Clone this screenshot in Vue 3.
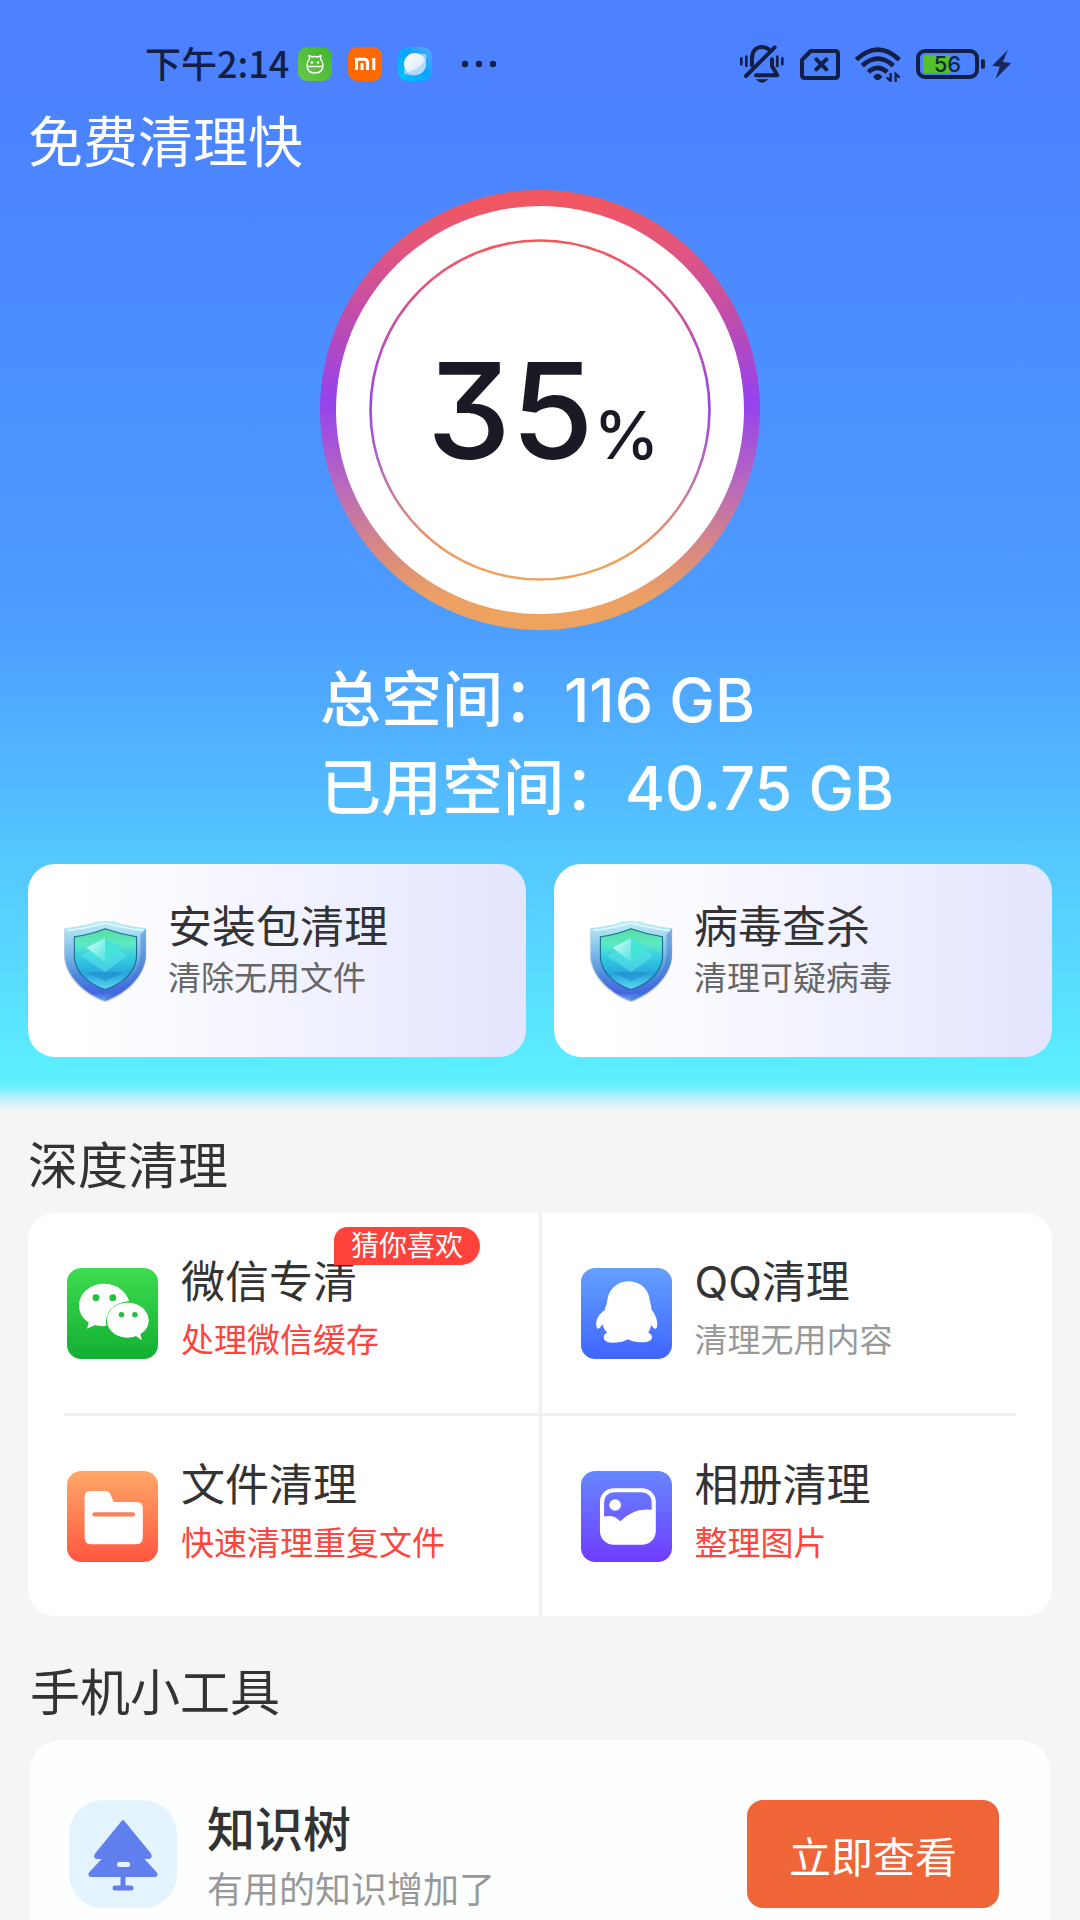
<script setup>
const quickCards = [
  { title: '安装包清理', note: '清除无用文件' },
  { title: '病毒查杀', note: '清理可疑病毒' },
]

const deepRows = [
  [
    { icon: 'wechat', title: '微信专清', note: '处理微信缓存', hot: true, badge: '猜你喜欢' },
    { icon: 'penguin', title: 'QQ清理', note: '清理无用内容', hot: false },
  ],
  [
    { icon: 'folder', title: '文件清理', note: '快速清理重复文件', hot: true },
    { icon: 'album', title: '相册清理', note: '整理图片', hot: true },
  ],
]
</script>

<template>
  <div class="page">
    <svg class="sprite" aria-hidden="true">
      <defs>
        <linearGradient id="g-ring" x1="0" y1="0" x2="0" y2="1">
          <stop offset="0" stop-color="#f3575a" />
          <stop offset="0.12" stop-color="#e4567a" />
          <stop offset="0.3" stop-color="#bd4cb0" />
          <stop offset="0.48" stop-color="#9642ee" />
          <stop offset="0.66" stop-color="#b566c0" />
          <stop offset="0.82" stop-color="#d98a80" />
          <stop offset="0.93" stop-color="#eda163" />
          <stop offset="1" stop-color="#eea45e" />
        </linearGradient>
        <linearGradient id="g-wechat" x1="0" y1="0" x2="0" y2="1">
          <stop offset="0" stop-color="#3edc50" />
          <stop offset="1" stop-color="#12ae32" />
        </linearGradient>
        <linearGradient id="g-penguin" x1="0" y1="0" x2="0" y2="1">
          <stop offset="0" stop-color="#64a0ff" />
          <stop offset="1" stop-color="#3f65ff" />
        </linearGradient>
        <linearGradient id="g-folder" x1="0" y1="0" x2="0" y2="1">
          <stop offset="0" stop-color="#ffa869" />
          <stop offset="1" stop-color="#ff563e" />
        </linearGradient>
        <linearGradient id="g-album" x1="0" y1="0" x2="0" y2="1">
          <stop offset="0" stop-color="#6688ff" />
          <stop offset="1" stop-color="#6f3cff" />
        </linearGradient>
        <linearGradient id="g-rim" x1="0" y1="0" x2="0" y2="1">
          <stop offset="0" stop-color="#c2f1f7" />
          <stop offset="0.35" stop-color="#86c3ea" />
          <stop offset="0.7" stop-color="#4c86dd" />
          <stop offset="0.9" stop-color="#4565e2" />
          <stop offset="1" stop-color="#66b0e8" />
        </linearGradient>
        <linearGradient id="g-core" x1="0" y1="0" x2="0" y2="1">
          <stop offset="0" stop-color="#58dda0" />
          <stop offset="0.25" stop-color="#5ceac4" />
          <stop offset="0.45" stop-color="#36cfe0" />
          <stop offset="0.75" stop-color="#28a6dc" />
          <stop offset="1" stop-color="#5fd8f5" />
        </linearGradient>
        <linearGradient id="g-gem" x1="0" y1="0" x2="1" y2="1">
          <stop offset="0" stop-color="#d8fff4" />
          <stop offset="1" stop-color="#4fe4e4" />
        </linearGradient>
        <linearGradient id="g-green" x1="0" y1="1" x2="1" y2="0">
          <stop offset="0" stop-color="#68c948" />
          <stop offset="1" stop-color="#41b52e" />
        </linearGradient>
        <linearGradient id="g-planet" x1="0" y1="1" x2="1" y2="0">
          <stop offset="0" stop-color="#00c4ff" />
          <stop offset="0.55" stop-color="#0fa2ff" />
          <stop offset="1" stop-color="#58acff" />
        </linearGradient>
        <linearGradient id="g-globe" x1="0" y1="0" x2="1" y2="1">
          <stop offset="0" stop-color="#ffffff" />
          <stop offset="1" stop-color="#cfe6fb" />
        </linearGradient>
      </defs>

      <symbol id="shield" viewBox="172 238 238 250" preserveAspectRatio="none">
        <path d="M181 268 Q240 255 294 243 Q350 255 408 268 V348 C406 410 354 464 294 486 C234 464 182 410 180 348Z" fill="#8f9bb5" opacity="0.45" />
        <path d="M182 265 Q240 262 272 243 L294 249 L318 243 Q350 262 407 265 V345 C405 405 354 458 294 482 C234 458 184 405 182 345Z" fill="url(#g-rim)" />
        <path d="M407 266 V345 C405 405 354 458 294 482 V470 C345 450 390 400 392 342 V285Z" fill="#3f6fd2" opacity="0.45" />
        <path d="M190 272 Q240 266 294 250 Q350 266 400 272" fill="none" stroke="#dffaff" stroke-width="5" />
        <path d="M209 291 Q255 284 294 267 Q338 284 381 291 V350 C379 398 340 432 294 448 C249 432 211 398 209 350Z" fill="url(#g-core)" stroke="#176d90" stroke-width="3" />
        <path d="M228 349 L294 300 L356 349 L294 396Z" fill="#5fe9ea" opacity="0.5" />
        <path d="M243 323 L294 295 V366Z" fill="url(#g-gem)" />
        <path d="M294 295 L344 325 L294 366Z" fill="#45e3d8" />
        <path d="M243 396 H346 L294 424Z" fill="#1b84c8" opacity="0.45" />
      </symbol>

      <symbol id="wechat" viewBox="195 207 264 273" preserveAspectRatio="none">
        <rect x="195" y="207" width="264" height="273" rx="42" fill="url(#g-wechat)" />
        <path d="M302 254 C262 254 230 283 230 320 C230 341 241 359 258 370 L253 389 L276 378 C286 381 296 382 309 381 C303 343 328 311 375 306 C367 276 338 254 302 254Z" fill="#fff" />
        <path d="M371 311 C337 311 311 334 311 364 C311 393 337 416 371 416 C379 416 388 414 395 411 L412 424 L408 405 C424 396 432 381 432 364 C432 334 405 311 371 311Z" fill="#fff" />
        <g fill="#24bf40">
          <circle cx="279" cy="296" r="10" />
          <circle cx="328" cy="296" r="10" />
          <circle cx="353" cy="347" r="8" />
          <circle cx="392" cy="347" r="8" />
        </g>
      </symbol>

      <symbol id="penguin" viewBox="119 207 264 273" preserveAspectRatio="none">
        <rect x="119" y="207" width="264" height="273" rx="42" fill="url(#g-penguin)" />
        <path d="M257 247 C222 247 198 274 195 306 C194 318 190 322 188 333 C172 345 163 360 163 374 C163 383 165 388 168 389 C173 389 177 382 182 376 C184 388 189 395 195 401 C187 404 184 409 185 416 C186 426 196 431 214 431 C233 431 247 427 255 421 C264 426 278 430 297 430 C314 430 324 425 325 415 C325 408 321 404 314 401 C318 395 321 387 322 378 C327 384 331 390 336 389 C340 387 341 379 340 370 C338 355 332 343 323 331 C325 323 320 316 319 306 C316 272 292 247 257 247Z" fill="#fff" />
      </symbol>

      <symbol id="folder" viewBox="195 213 264 273" preserveAspectRatio="none">
        <rect x="195" y="213" width="264" height="273" rx="42" fill="url(#g-folder)" />
        <path d="M264 273 H308 Q317 273 320 281 L331 306 H396 Q415 306 415 326 V412 Q415 433 395 433 H265 Q246 433 246 412 V292 Q246 273 264 273Z" fill="#fff" />
        <path d="M275 343 H386" stroke="#f3835e" stroke-width="13" stroke-linecap="round" />
      </symbol>

      <symbol id="album" viewBox="119 213 264 273" preserveAspectRatio="none">
        <rect x="119" y="213" width="264" height="273" rx="42" fill="url(#g-album)" />
        <rect x="180" y="271" width="150" height="157" rx="34" fill="none" stroke="#fff" stroke-width="12" />
        <path d="M180 352 Q212 340 233 364 Q272 320 330 330 V396 Q328 428 298 428 H212 Q182 428 180 396Z" fill="#fff" />
        <circle cx="218" cy="315" r="17" fill="#fff" />
      </symbol>
    </svg>

    <header class="hero">
      <div class="status">
        <div class="status-left">
          <time class="clock">下午2:14</time>
          <div class="apps">
            <svg width="34" height="34" viewBox="0 0 34 34" aria-hidden="true">
              <rect width="34" height="34" rx="9" fill="url(#g-green)" />
              <g fill="none" stroke="#fff" stroke-width="1.4" stroke-linejoin="round">
                <path d="M11.5 12 L11 8.5 L14 10 Q17 9 20 10 L23 8.5 L22.5 12 Q25 14.5 25 18 Q25 26 17 26 Q9 26 9 18 Q9 14.5 11.5 12Z" />
                <path d="M9 19.5 H25" />
              </g>
              <circle cx="14" cy="15.5" r="1.3" fill="#fff" />
              <circle cx="20" cy="15.5" r="1.3" fill="#fff" />
            </svg>
            <svg width="34" height="34" viewBox="0 0 34 34" aria-hidden="true">
              <rect width="34" height="34" rx="9" fill="#ff6900" />
              <path d="M8.500 23 V12.300 H16 Q19.500 12.300 19.500 16 V23 M14 16 V23 M25.800 11 V23" fill="none" stroke="#fff" stroke-width="3" />
            </svg>
            <svg width="34" height="34" viewBox="0 0 34 34" aria-hidden="true">
              <rect width="34" height="34" rx="9" fill="url(#g-planet)" />
              <path d="M22 8 Q28 5 28.500 9 Q29 14 20 21 Q10 29 6.500 27 Q4.500 25 8 20Z" fill="#8fcdff" />
              <circle cx="17" cy="17" r="11" fill="url(#g-globe)" />
              <path d="M28 10 Q26 18 17 22 Q10 26 6.500 26 Q13 30 20 27.500 Q28 23 28 15Z" fill="#a5d5fb" opacity="0.8" />
            </svg>
          </div>
          <svg class="more" width="36" height="8" viewBox="0 0 36 8" fill="#131f45" aria-hidden="true">
            <circle cx="4" cy="4" r="3.2" />
            <circle cx="18" cy="4" r="3.2" />
            <circle cx="32" cy="4" r="3.2" />
          </svg>
        </div>

        <div class="status-right">
          <svg width="44" height="38" viewBox="120 47 132 114" fill="none" stroke="#131f45" stroke-width="12" stroke-linecap="round" aria-hidden="true">
            <path d="M156 108 V88 C156 66 168 53 186 53 Q198 53 206 60" />
            <path d="M138 140 L224 54" />
            <path d="M216 90 V110 L232 138 H168" stroke-linejoin="round" />
            <path d="M124 87 V105 M139 82 V110 M232 82 V110 M247 87 V105" stroke-width="8" />
            <path d="M167 150 H205 Q186 170 167 150Z" fill="#131f45" stroke="none" />
          </svg>
          <svg class="sim" width="40" height="31" viewBox="300 60 120 93" fill="none" stroke="#131f45" stroke-width="12" aria-hidden="true">
            <path d="M332 66 H405 Q414 66 414 75 V138 Q414 147 405 147 H315 Q306 147 306 138 V93Z" stroke-linejoin="round" />
            <path d="M349 91 L379 121 M379 91 L349 121" stroke-linecap="round" />
          </svg>
          <svg class="wifi" width="46" height="35" viewBox="465 52 138 105" fill="none" stroke="#131f45" stroke-width="14" aria-hidden="true">
            <path d="M469 90 Q533 30 598 90" />
            <path d="M487 108 Q533 66 580 108" />
            <path d="M505 127 Q533 102 562 127" />
            <path d="M519 141 Q533 124 548 141 L540 149 Q533 155 526 149Z" fill="#131f45" stroke="none" />
            <path d="M572 130 V154 L560 143 M587 157 V133 L599 144" stroke-width="7" />
          </svg>
          <div class="battery"><span>56</span></div>
          <svg class="bolt" width="19" height="29" viewBox="876 60 56 87" aria-hidden="true">
            <path d="M923 60 L876 107 L899 110 L886 147 L933 99 L908 96Z" fill="#18285a" />
          </svg>
        </div>
      </div>

      <h1 class="app-name">免费清理快</h1>

      <div class="ring">
        <svg viewBox="0 0 440 440" aria-hidden="true">
          <circle cx="220" cy="220" r="220" fill="url(#g-ring)" />
          <circle cx="220" cy="220" r="204" fill="#fff" />
          <circle cx="220" cy="220" r="169.5" fill="none" stroke="url(#g-ring)" stroke-width="2.6" />
        </svg>
        <p class="percent"><strong>35</strong><span>%</span></p>
      </div>

      <div class="space">
        <p>总空间：116 GB</p>
        <p>已用空间：40.75 GB</p>
      </div>

      <div class="quick">
        <button v-for="card in quickCards" :key="card.title" type="button" class="quick-card">
          <svg class="shield" aria-hidden="true"><use href="#shield" /></svg>
          <span class="texts">
            <span class="name">{{ card.title }}</span>
            <span class="note">{{ card.note }}</span>
          </span>
        </button>
      </div>
    </header>

    <section class="section">
      <h2>深度清理</h2>
      <div class="panel">
        <template v-for="(row, r) in deepRows" :key="r">
          <hr v-if="r > 0" />
          <div class="row">
            <button v-for="item in row" :key="item.title" type="button" class="cell">
              <svg class="tile" aria-hidden="true"><use :href="'#' + item.icon" /></svg>
              <span class="texts">
                <span class="name">{{ item.title }}</span>
                <span class="note" :class="{ hot: item.hot }">{{ item.note }}</span>
              </span>
              <span v-if="item.badge" class="badge">{{ item.badge }}</span>
            </button>
          </div>
        </template>
      </div>
    </section>

    <section class="section">
      <h2>手机小工具</h2>
      <div class="tool">
        <svg class="tree" viewBox="0 0 108 108" aria-hidden="true">
          <rect width="108" height="108" rx="34" fill="#e3f4ff" />
          <path d="M54 21 L81 54 Q83 58 79 58 H73 L87 73 Q89 76 85 76 H23 Q19 76 21 73 L35 58 H28 Q25 58 27 54Z" fill="#627fee" stroke="#627fee" stroke-width="2" stroke-linejoin="round" />
          <path d="M54 74 V86 M46 88 H62" stroke="#627fee" stroke-width="5" stroke-linecap="round" />
          <rect x="48" y="62" width="13" height="5" rx="2" fill="#e3f4ff" />
        </svg>
        <div class="tool-text">
          <h3>知识树</h3>
          <p>有用的知识增加了</p>
        </div>
        <button type="button" class="view">立即查看</button>
      </div>
    </section>
  </div>
</template>

<style>
body {
  background: #f5f5f5;
}
</style>

<style scoped>
.page {
  font-family: Inter, "Noto Sans CJK SC", sans-serif;
  color: #333;
  background: #f5f5f5;
}

.sprite {
  position: absolute;
  width: 0;
  height: 0;
}

h1,
h2,
h3,
p {
  margin: 0;
  font-weight: 400;
}

button {
  font: inherit;
  color: inherit;
  border: 0;
  padding: 0;
  text-align: left;
  background: none;
}

svg {
  display: block;
  flex: none;
}

.hero {
  padding: 40px 28px 55px;
  background: linear-gradient(
    #4d7fff 0,
    #4b86ff 17%,
    #4c9bff 54%,
    #50aaff 63%,
    #54c3ff 75%,
    #5ae2ff 91%,
    #5bf0ff calc(100% - 34px),
    #72effc calc(100% - 24px),
    #c6f1fa calc(100% - 12px),
    #f5f5f5 100%
  );
}

.status {
  display: flex;
  justify-content: space-between;
  align-items: center;
  height: 48px;
  padding: 0 41px 0 117px;
}

.status-left,
.status-right,
.apps {
  display: flex;
  align-items: center;
}

.clock {
  padding-bottom: 4px;
  font-family: "Noto Sans CJK SC", sans-serif;
  font-size: 36px;
  line-height: 44px;
  font-weight: 500;
  color: #131f45;
}

.apps {
  gap: 16px;
  margin-left: 9px;
}

.more {
  margin-left: 29px;
}

.sim {
  margin-left: 16px;
}

.wifi {
  margin-left: 15px;
}

.battery {
  position: relative;
  box-sizing: border-box;
  width: 63px;
  height: 30px;
  margin-left: 15px;
  border: 4px solid #131f45;
  border-radius: 9px;
  padding: 2px 3px;
  background: linear-gradient(90deg, #55c12a 27px, transparent 27px) content-box;
  display: grid;
  place-items: center;
}

.battery::after {
  content: "";
  position: absolute;
  left: 61px;
  top: 6px;
  width: 4px;
  height: 10px;
  border-radius: 2px;
  background: #131f45;
}

.battery span {
  font-size: 22px;
  line-height: 18px;
  font-weight: 500;
  color: #0f2a3c;
}

.bolt {
  margin-left: 13px;
}

.app-name {
  margin-top: 14px;
  font-size: 55px;
  line-height: 80px;
  color: #fff;
}

.ring {
  display: grid;
  place-items: center;
  width: 440px;
  margin: 8px auto 0;
}

.ring > * {
  grid-area: 1 / 1;
}

.ring svg {
  width: 100%;
}

.percent {
  padding-left: 6px;
  color: #191a24;
  white-space: nowrap;
  font-feature-settings: "cv09";
}

.percent strong {
  font-size: 134px;
  font-weight: 500;
}

.percent span {
  font-size: 66px;
  font-weight: 500;
}

.space {
  width: 440px;
  margin: 26px auto 32px;
  font-size: 61px;
  line-height: 88px;
  color: #fff;
  white-space: nowrap;
}

.space p {
  font-weight: 500;
}

.quick {
  display: grid;
  grid-template-columns: 1fr 1fr;
  gap: 28px;
}

.quick-card {
  display: flex;
  align-items: center;
  gap: 21px;
  min-height: 193px;
  padding: 0 33px;
  border-radius: 27px;
  background: linear-gradient(90deg, #fff 10%, #e4e5ff);
}

.shield {
  width: 86px;
  height: 84px;
}

.texts {
  display: flex;
  flex-direction: column;
}

.name {
  font-size: 44px;
  line-height: 60px;
}

.note {
  font-size: 33px;
  line-height: 56px;
  color: #999;
}

.quick-card .texts {
  padding-bottom: 18px;
}

.quick-card .name {
  line-height: 52px;
}

.quick-card .note {
  line-height: 50px;
  color: #666;
}

.note.hot {
  color: #ff443c;
}

.section {
  padding: 16px 28px 0;
}

.section + .section {
  padding: 39px 30px 0;
}

h2 {
  margin-bottom: 9px;
  font-size: 50px;
  line-height: 76px;
}

.panel {
  border-radius: 27px;
  background: #fff;
}

.panel hr {
  height: 3px;
  margin: 0 36px;
  border: 0;
  background: #f1f1ec;
}

.row {
  display: flex;
}

.cell {
  position: relative;
  box-sizing: border-box;
  flex: 1 1 0;
  display: flex;
  align-items: center;
  gap: 23px;
  min-height: 200px;
  padding: 0 39px;
}

.cell + .cell {
  border-left: 3px solid #f1f1ec;
}

.cell .texts {
  padding-bottom: 6px;
}

.tile {
  width: 91px;
  height: 91px;
}

.badge {
  position: absolute;
  left: 306px;
  top: 14px;
  padding: 0 17px;
  border-radius: 14px 20px 20px 0;
  font-size: 28px;
  line-height: 38px;
  color: #fff;
  background: #ff433a;
}

.tool {
  display: flex;
  align-items: flex-start;
  padding: 60px 51px 0 39px;
  border-radius: 30px 30px 0 0;
  background: #fdfffe;
}

.tree {
  width: 108px;
  height: 108px;
}

.tool-text {
  flex: 1;
  margin-left: 30px;
}

.tool-text h3 {
  font-size: 48px;
  line-height: 60px;
  font-weight: 500;
}

.tool-text p {
  font-size: 36px;
  line-height: 60px;
  color: #999;
}

.view {
  width: 252px;
  height: 108px;
  border-radius: 16px;
  font-size: 42px;
  text-align: center;
  color: #fff;
  background: #f06538;
}
</style>
